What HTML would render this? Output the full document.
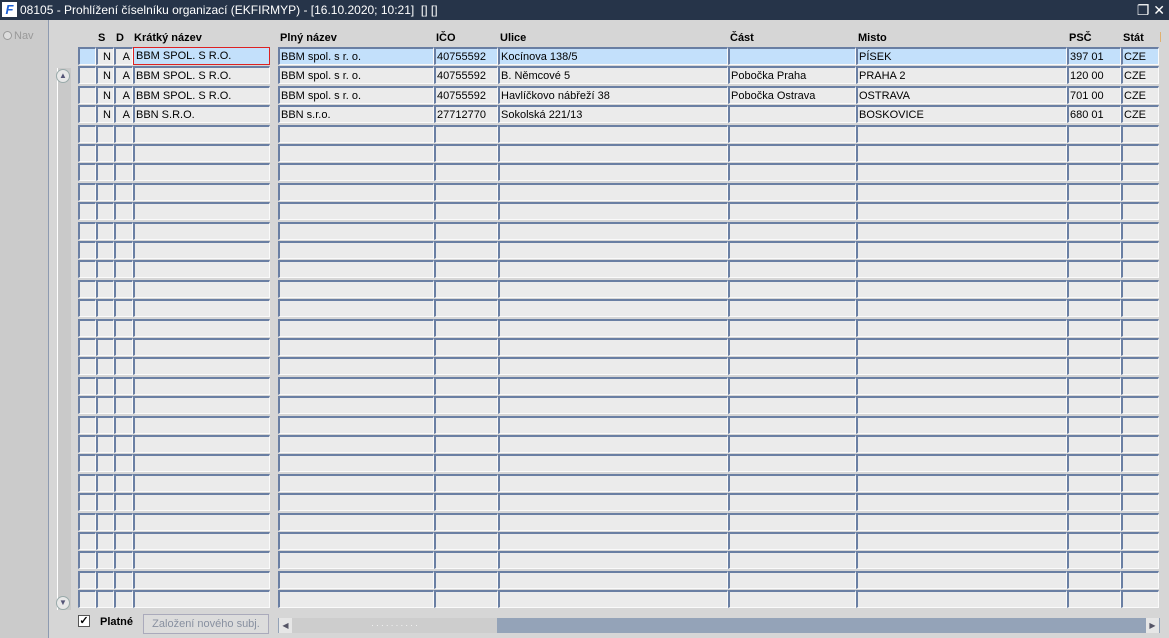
<!DOCTYPE html>
<html><head><meta charset="utf-8"><style>
*{margin:0;padding:0;box-sizing:border-box}
body{width:1169px;height:638px;overflow:hidden;background:#d6d6d6;font-family:"Liberation Sans",sans-serif;font-size:11px;position:relative}
#title{position:absolute;left:0;top:0;width:1169px;height:20px;background:#263449;color:#fff;font-size:12px;line-height:20px;padding-left:20px}
#logo{position:absolute;left:2px;top:2px;width:15px;height:15px;background:#fff;color:#1b5fd6;font-weight:bold;font-style:italic;font-size:13px;line-height:15px;text-align:center}
#left{position:absolute;left:0;top:20px;width:49px;height:618px;background:#cbcbcb;border-right:1px solid #8d9ab0}
#nav{position:absolute;left:3px;top:30px;color:#999;font-size:11px}
#nav span{display:inline-block;width:9px;height:9px;border-radius:50%;background:#ddd;border:1px solid #999;vertical-align:-1px;margin-right:2px}
.c{position:absolute;height:18px;background:#ebebeb;border-top:2px solid #6a7fa3;border-left:2px solid #6a7fa3;border-bottom:1px solid #fafafa;border-right:1px solid #fafafa;line-height:17px;padding-left:1px;white-space:nowrap;overflow:hidden;color:#000}
.sel{background:#c3e0fb}
.h{position:absolute;top:32px;font-weight:bold;font-size:11px}
.r{text-align:right;padding-right:2px}
#vs{position:absolute;left:57px;top:68px;width:14px;height:542px;background:#c9c9c9;border-left:1px solid #fff}
.btn{position:absolute;width:14px;height:14px;border-radius:7px;background:#e8e8e8;border:1px solid #9aa;font-size:8px;color:#557;text-align:center;line-height:12px}
</style></head><body>
<div id="title"><div id="logo">F</div>08105 - Prohlížení číselníku organizací (EKFIRMYP) - [16.10.2020; 10:21]&nbsp; [] []<span style="position:absolute;right:4px;top:0;font-size:14px">❐ ✕</span></div>
<div id="left"></div>
<div id="nav"><span></span>Nav</div>
<div id="vs"></div>
<div class="btn" style="left:56px;top:69px">▲</div>
<div class="btn" style="left:56px;top:596px">▼</div>
<div class="h" style="left:98px">S</div><div class="h" style="left:116px">D</div>
<div class="h" style="left:134px">Krátký název</div><div class="h" style="left:280px">Plný název</div>
<div class="h" style="left:436px">IČO</div><div class="h" style="left:500px">Ulice</div>
<div class="h" style="left:730px">Část</div><div class="h" style="left:858px">Misto</div>
<div class="h" style="left:1069px">PSČ</div><div class="h" style="left:1123px">Stát</div>
<div style="position:absolute;left:1160px;top:32px;width:1px;height:10px;background:#e0b070"></div>
<div id="grid"></div>
<div style="position:absolute;left:78px;top:615px;width:12px;height:12px;background:#fff;border:1px solid #555;font-size:11px;line-height:10px;text-align:center;font-weight:bold">✓</div>
<div style="position:absolute;left:100px;top:616px;font-weight:bold">Platné</div>
<div style="position:absolute;left:143px;top:614px;width:126px;height:20px;border:1px solid #aab;background:#dcdcdc;color:#8890a0;text-align:center;line-height:18px">Založení nového subj.</div>
<div style="position:absolute;left:278px;top:618px;width:882px;height:15px;background:#94a3b8"></div>
<div style="position:absolute;left:292px;top:618px;width:205px;height:15px;background:#cdcdcd;color:#fff;font-size:8px;text-align:center;line-height:15px">· · · · · · · · · ·</div>
<div style="position:absolute;left:279px;top:618px;width:13px;height:15px;background:#e6e6e6;color:#556;font-size:8px;line-height:15px;text-align:center">◀</div>
<div style="position:absolute;left:1146px;top:618px;width:13px;height:15px;background:#e6e6e6;color:#556;font-size:8px;line-height:15px;text-align:center">▶</div>
<script>
var cols=[[78,18],[96,18],[114,19],[133,137],[278,156],[434,64],[498,230],[728,128],[856,211],[1067,54],[1121,38]];
var data=[["","N","A","BBM SPOL. S R.O.","BBM spol. s r. o.","40755592","Kocínova 138/5","","PÍSEK","397 01","CZE"],
["","N","A","BBM SPOL. S R.O.","BBM spol. s r. o.","40755592","B. Němcové 5","Pobočka Praha","PRAHA 2","120 00","CZE"],
["","N","A","BBM SPOL. S R.O.","BBM spol. s r. o.","40755592","Havlíčkovo nábřeží 38","Pobočka Ostrava","OSTRAVA","701 00","CZE"],
["","N","A","BBN S.R.O.","BBN s.r.o.","27712770","Sokolská 221/13","","BOSKOVICE","680 01","CZE"]];
var h="";
for(var i=0;i<29;i++){var t=Math.round(47+i*19.4);for(var j=0;j<11;j++){var v=(data[i]||[])[j]||"";var cl="c"+(i==0&&j!=1&&j!=2?" sel":"")+(j==1||j==2?" r":"");var ex=(i==0&&j==3)?";border:1px solid #d22;line-height:16px;padding-left:2px":"";h+='<div class="'+cl+'" style="left:'+cols[j][0]+'px;top:'+t+'px;width:'+cols[j][1]+'px'+ex+'">'+v+'</div>';}}
document.getElementById("grid").innerHTML=h;
</script>
</body></html>
